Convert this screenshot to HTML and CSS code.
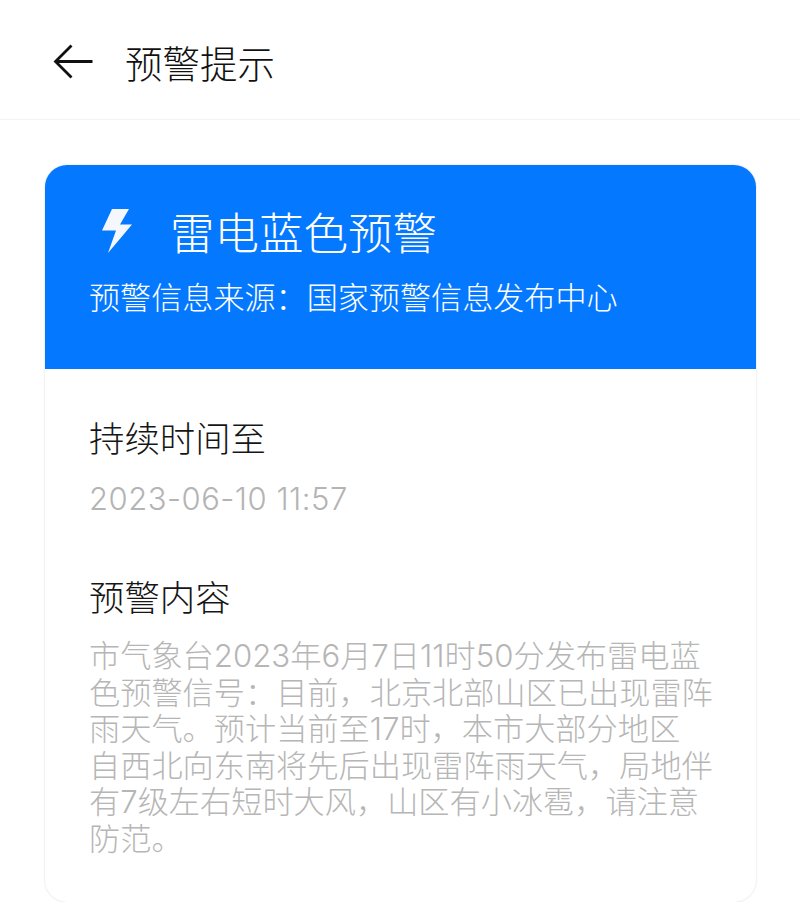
FILE: index.html
```html
<!DOCTYPE html>
<html lang="zh-CN">
<head>
  <meta charset="UTF-8">
  <meta name="viewport" content="width=device-width, initial-scale=1.0">
  <title>预警提示</title>
  <link rel="stylesheet" href="styles.css">
</head>
<body>
  <header class="top-bar">
    <svg class="back-icon" width="40" height="35" viewBox="0 0 40 35" fill="none" stroke="#111" stroke-width="2.800">
      <path d="M18.500 1.500 L2.500 17.500 L18.500 33.500 M2.500 17.500 H39.500"/>
    </svg>
    <h1 class="page-title">预警提示</h1>
  </header>

  <main class="card">
    <section class="card-head">
      <div class="alert-row">
        <svg class="bolt-icon" width="30" height="44" viewBox="0 0 30 44">
          <path fill="#f4f8fc" d="M10 0 H27 L18 15.500 H30 L6 44 L14 21.500 H0 Z"/>
        </svg>
        <h2 class="alert-title">雷电蓝色预警</h2>
      </div>
      <p class="alert-source">预警信息来源：国家预警信息发布中心</p>
    </section>
    <section class="card-body">
      <h3 class="label">持续时间至</h3>
      <p class="date">2023-06-10 11:57</p>
      <h3 class="label label-content">预警内容</h3>
      <p class="content-text">市气象台2023年6月7日11时50分发布雷电蓝<br>色预警信号：目前，北京北部山区已出现雷阵<br>雨天气。预计当前至17时，本市大部分地区<br>自西北向东南将先后出现雷阵雨天气，局地伴<br>有7级左右短时大风，山区有小冰雹，请注意<br>防范。</p>
    </section>
  </main>
</body>
</html>
```

FILE: styles.css
```css
* {
  margin: 0;
  padding: 0;
  box-sizing: border-box;
}

body {
  background-color: #fff;
  font-family: "Noto Sans CJK SC", "Noto Sans", sans-serif;
  font-weight: 300;
}

h1, h2, h3 {
  font-weight: 300;
}

.top-bar {
  height: 120px;
  display: flex;
  align-items: center;
  padding: 4px 0 0 53px;
  border-bottom: 1px solid #f3f3f3;
}

.back-icon {
  flex-shrink: 0;
}

.page-title {
  margin-left: 32px;
  font-size: 37.500px;
  line-height: 50px;
  color: #111;
}

.card {
  width: 711px;
  margin: 45px 0 0 45px;
  border-radius: 22px;
  overflow: hidden;
  box-shadow: 0 0 2px rgba(0, 0, 0, 0.18);
}

.card-head {
  height: 204px;
  background-color: #0479ff;
  padding: 40px 0 0 44px;
  color: #fff;
}

.alert-row {
  display: flex;
  align-items: center;
  height: 52px;
}

.bolt-icon {
  margin-left: 13px;
  flex-shrink: 0;
}

.alert-title {
  margin-left: 38px;
  font-size: 44.500px;
  line-height: 52px;
}

.alert-source {
  margin-top: 17px;
  font-size: 31.100px;
  line-height: 44px;
  white-space: nowrap;
}

.card-body {
  height: 533px;
  padding: 43px 0 0 44px;
}

.label {
  font-size: 35.400px;
  line-height: 50px;
  color: #161616;
}

.date {
  margin-top: 17px;
  font-family: Inter, sans-serif;
  font-size: 31px;
  letter-spacing: 0.500px;
  line-height: 40px;
  color: #b4b4b4;
}

.label-content {
  margin-top: 52px;
}

.content-text {
  margin-top: 17px;
  font-family: Inter, "Noto Sans CJK SC", sans-serif;
  font-size: 31.200px;
  line-height: 36.600px;
  color: #b6b6b6;
  white-space: nowrap;
}
```
